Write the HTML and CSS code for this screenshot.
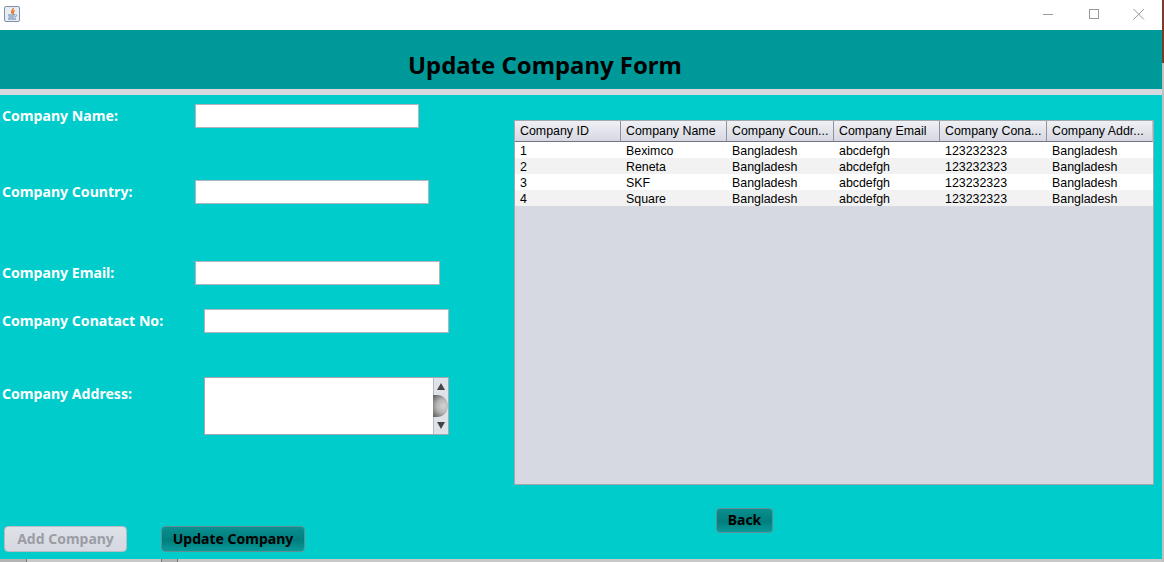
FILE: index.html
```html
<!doctype html>
<html lang="en">
<head>
    <meta charset="UTF-8">
    <title>Update Company Form</title>
    <link rel="stylesheet" href="styles.css">
</head>
<body>
  <div class="page">
    <div class="frame">
      <div class="titlebar">
        <svg class="java-icon" width="16" height="16" viewBox="0 0 16 16">
          <rect x="0.5" y="0.5" width="15" height="15" rx="1.5" fill="#e8edf3" stroke="#7f93ab"/>
          <path d="M9 2c1 1.500-2 2.500-1.300 4.500.3.700.8 1 1.300 1-.8-1 1.300-2 1.300-3.300" fill="none" stroke="#e8701a" stroke-width="1.400"/>
          <path d="M4 9h7M4.500 11h6M4 13h8" stroke="#5a7fa8" stroke-width="1"/>
          <path d="M11.500 8.500c1.500 0 1.500 2-.5 2.500" fill="none" stroke="#5a7fa8" stroke-width="0.800"/>
        </svg>
        <div class="win-btns">
          <svg width="16" height="16" viewBox="0 0 16 16"><path d="M3 8.500h10" stroke="#999" stroke-width="1"/></svg>
          <svg width="16" height="16" viewBox="0 0 16 16"><rect x="3.500" y="3.500" width="9" height="9" fill="none" stroke="#999"/></svg>
          <svg width="16" height="16" viewBox="0 0 16 16"><path d="M2.500 3l10.500 10.500M13 3L2.500 13.500" stroke="#999" stroke-width="1"/></svg>
        </div>
      </div>

      <div class="header"><h1>Update Company Form</h1></div>
      <div class="divider"></div>

      <div class="content">
        <div class="form">
          <div class="row row-name">
            <label>Company Name:</label>
            <input class="w-name" type="text">
          </div>
          <div class="row row-country">
            <label>Company Country:</label>
            <input class="w-country" type="text">
          </div>
          <div class="row row-email">
            <label>Company Email:</label>
            <input class="w-email" type="text">
          </div>
          <div class="row row-contact">
            <label class="wide">Company Conatact No:</label>
            <input class="w-contact" type="text">
          </div>
          <div class="row row-address">
            <label class="wide">Company Address:</label>
            <div class="textarea">
              <div class="scrollbar">
                <span class="arrow up"></span>
                <span class="thumb"></span>
                <span class="arrow down"></span>
              </div>
            </div>
          </div>
          <div class="actions">
            <button class="btn disabled">Add Company</button>
            <button class="btn update">Update Company</button>
          </div>
        </div>

        <div class="side">
          <div class="table-pane">
            <table>
              <thead>
                <tr>
                  <th>Company ID</th><th>Company Name</th><th>Company Coun...</th>
                  <th>Company Email</th><th>Company Cona...</th><th>Company Addr...</th>
                </tr>
              </thead>
              <tbody>
                <tr><td>1</td><td>Beximco</td><td>Bangladesh</td><td>abcdefgh</td><td>123232323</td><td>Bangladesh</td></tr>
                <tr><td>2</td><td>Reneta</td><td>Bangladesh</td><td>abcdefgh</td><td>123232323</td><td>Bangladesh</td></tr>
                <tr><td>3</td><td>SKF</td><td>Bangladesh</td><td>abcdefgh</td><td>123232323</td><td>Bangladesh</td></tr>
                <tr><td>4</td><td>Square</td><td>Bangladesh</td><td>abcdefgh</td><td>123232323</td><td>Bangladesh</td></tr>
              </tbody>
            </table>
          </div>
          <button class="btn back">Back</button>
        </div>
      </div>
      <div class="bottom-strip">
        <span class="tab tab-a"></span>
        <span class="tab tab-b"></span>
      </div>
    </div>
    <div class="edge"></div>
  </div>
</body>
</html>
```

FILE: styles.css
```css
* { margin: 0; padding: 0; box-sizing: border-box; }
html, body { height: 100%; overflow: hidden; }
body { background: #d0d0d0; font-family: "Liberation Sans", sans-serif; }

.page { width: 1164px; height: 562px; display: flex; }
.frame { width: 1162px; height: 562px; display: flex; flex-direction: column; flex: none; }
.edge { width: 2px; height: 562px; flex: none;
        background: linear-gradient(#7a3b2a 63px, #c0c0c0 63px); }

.titlebar { height: 30px; background: #fff; display: flex; align-items: center;
            justify-content: space-between; padding: 0 15px 0 4px; flex: none; }
.java-icon { margin-top: -2px; }
.win-btns { display: flex; gap: 29.5px; margin-top: -2px; }

.header { height: 59px; background: #009999; flex: none; padding: 19px 0 0 408px; }
.header h1 { font-family: "Noto Sans", sans-serif; font-size: 23.9px; line-height: 32px;
             font-weight: 700; color: #000; }
.divider { height: 6px; background: #d6d9e0; flex: none; }

.content { height: 464px; background: #00cccc; display: flex; flex: none; }

.form { width: 514px; padding: 9px 0 0 2px; display: flex; flex-direction: column; flex: none; }
.row { display: flex; align-items: flex-start; }
.row label { width: 193px; font-family: "Noto Sans", sans-serif; font-size: 14.1px; font-weight: 700;
             line-height: 24px; color: #fff; flex: none; }
.row label.wide { width: 202px; }
.row input { height: 24px; background: #fff; border: 1px solid #b0b4bc; flex: none; }

.row-country { margin-top: 52px; }
.row-email { margin-top: 57px; }
.row-contact { margin-top: 24px; }
.row-address { margin-top: 44px; }
.row-address label { margin-top: 5px; }

.w-name { width: 224px; }
.w-country { width: 234px; }
.w-email { width: 245px; }
.w-contact { width: 245px; }

.textarea { width: 245px; height: 58px; background: #fff; border: 1px solid #a6a6b2;
            display: flex; justify-content: flex-end; }
.scrollbar { width: 15px; background: #dfe2e8; border-left: 1px solid #b4b8c0;
             display: flex; flex-direction: column; align-items: center;
             justify-content: space-between; padding: 5px 0 5px; position: relative; }
.arrow { width: 0; height: 0; border-left: 4px solid transparent; border-right: 4px solid transparent; }
.arrow.up { border-bottom: 7px solid #444; }
.arrow.down { border-top: 7px solid #444; }
.thumb { position: absolute; left: -1px; top: 17px; width: 15px; height: 22px;
         border-radius: 0 11px 11px 0;
         background: radial-gradient(circle at 70% 50%, #d4d4d4, #b4b4b4 45%, #585858 100%); }

.actions { display: flex; gap: 34px; margin: 91px 0 0 2px; }

.btn { height: 26px; border-radius: 4px; font-family: "Noto Sans", sans-serif;
       font-size: 14px; line-height: 20px; font-weight: 700; color: #000;
       border: 1px solid #5f8f92;
       background: linear-gradient(#0b8f8f, #007e7e 55%, #0a9a9a); }
.btn.disabled { width: 123px; color: #9a9da6; border-color: #b9bcc6;
                background: linear-gradient(#dfe1e8, #d5d8e0); }
.btn.update { width: 144px; }
.btn.back { width: 57px; height: 25px; padding-bottom: 2px; margin: 23px 0 0 202px; display: block; }

.side { width: 640px; padding-top: 25px; flex: none; }
.table-pane { height: 365px; background: #d6d9e2; border: 1px solid #a0a8b0; }
table { width: 638px; border-collapse: separate; border-spacing: 0; table-layout: fixed;
        font-size: 12.4px; color: #000; }
th { height: 21px; font-weight: 400; text-align: left; padding-left: 5px; overflow: hidden; white-space: nowrap;
     background: linear-gradient(#f0f1f5, #d6d8e2);
     border-right: 1px solid #8f93a0; border-bottom: 1px solid #6f7380; width: 106px; }
th:nth-child(3), th:nth-child(5) { width: 107px; }
th:last-child { border-right: 1px solid #c0c4cc; }
td { height: 16px; line-height: 14px; padding: 2px 0 0 5px; background: #fff; }
tbody tr:nth-child(even) td { background: #f2f2f2; }

.bottom-strip { height: 3px; background: #c8c8c8; flex: none; display: flex; }
.tab { height: 3px; background: #b4b4b4; border-right: 1px solid #777; }
.tab-a { width: 27px; }
.tab-b { width: 17px; margin-left: 134px; border-left: 1px solid #777; }
```
